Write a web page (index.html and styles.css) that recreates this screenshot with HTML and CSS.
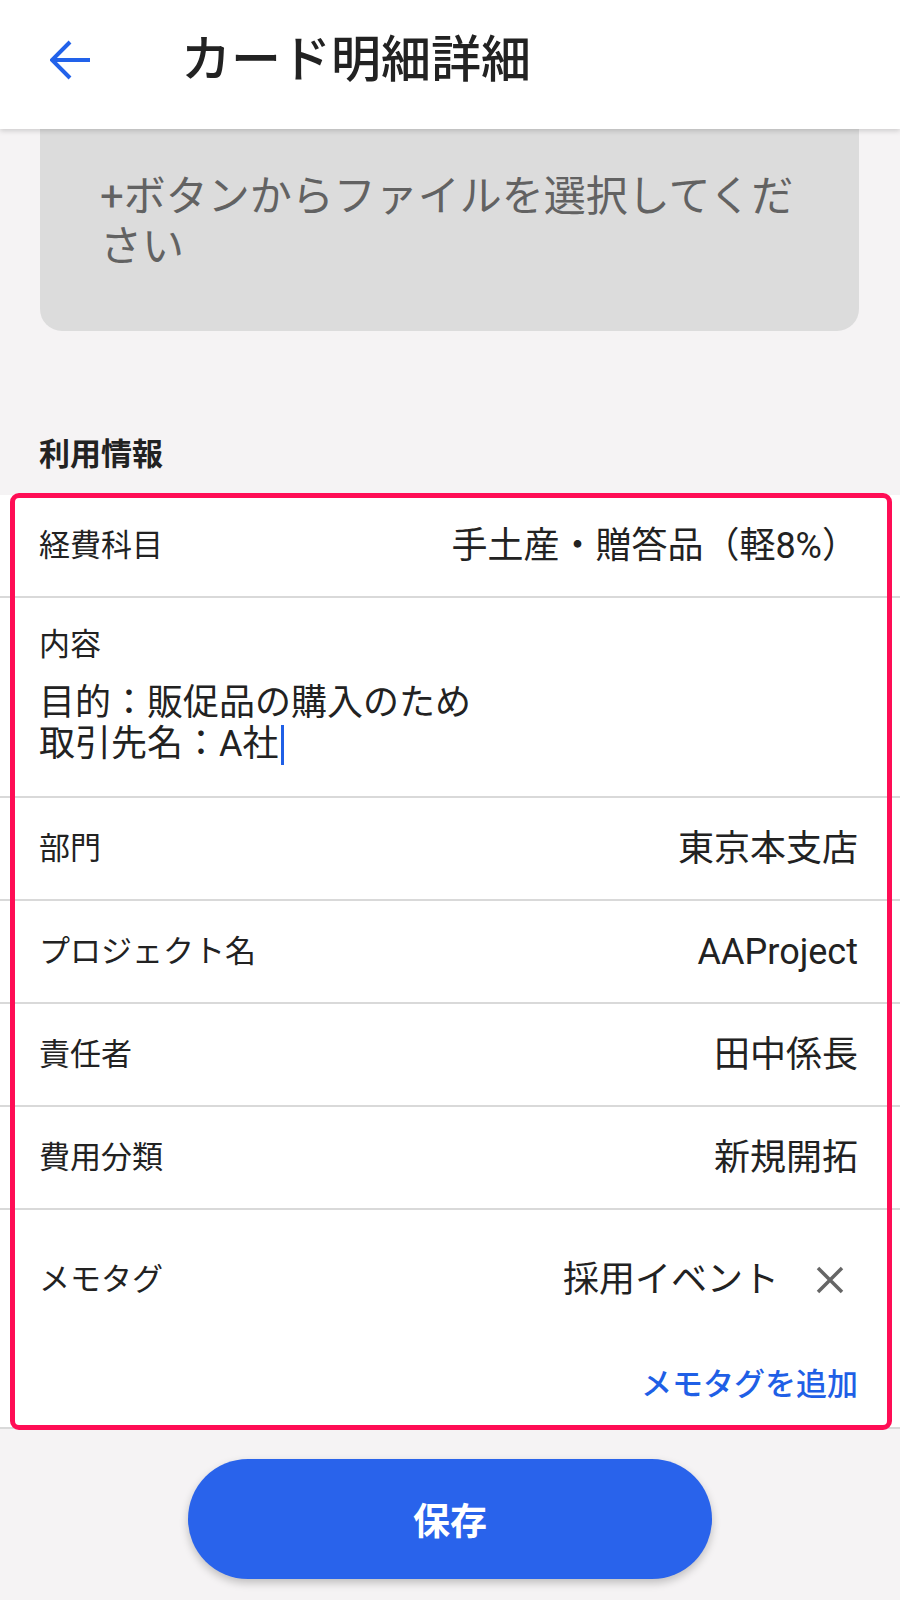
FILE: index.html
```html
<!DOCTYPE html>
<html lang="ja">
<head>
<meta charset="utf-8">
<title>カード明細詳細</title>
<link rel="stylesheet" href="styles.css">
</head>
<body>
<header class="appbar">
  <svg class="back" viewBox="0 0 40 40" width="40" height="40" aria-hidden="true">
    <path d="M2 20 H40" />
    <path d="M20 2 L2 20 L20 38" />
  </svg>
  <h1 class="title">カード明細詳細</h1>
</header>

<main class="content">
  <div class="dropzone">+ボタンからファイルを選択してください</div>

  <h2 class="section-label">利用情報</h2>

  <section class="card">
    <div class="row">
      <span class="label">経費科目</span>
      <span class="value">手土産・贈答品（軽8%）</span>
    </div>
    <div class="row row-multi">
      <span class="label">内容</span>
      <p class="memo-text">目的：販促品の購入のため<br>取引先名：A社<span class="caret"></span></p>
    </div>
    <div class="row">
      <span class="label">部門</span>
      <span class="value">東京本支店</span>
    </div>
    <div class="row">
      <span class="label">プロジェクト名</span>
      <span class="value">AAProject</span>
    </div>
    <div class="row">
      <span class="label">責任者</span>
      <span class="value">田中係長</span>
    </div>
    <div class="row">
      <span class="label">費用分類</span>
      <span class="value">新規開拓</span>
    </div>
    <div class="row row-tags">
      <div class="tag-line">
        <span class="label">メモタグ</span>
        <div class="tag">
          <span class="value">採用イベント</span>
          <svg class="remove" viewBox="0 0 28 28" width="28" height="28" aria-hidden="true">
            <path d="M2 2 L26 26 M26 2 L2 26" />
          </svg>
        </div>
      </div>
      <a class="add-tag">メモタグを追加</a>
    </div>
    <div class="highlight"></div>
  </section>

  <div class="actions">
    <button class="save">保存</button>
  </div>
</main>
</body>
</html>
```

FILE: styles.css
```css
* {
  box-sizing: border-box;
}

html, body {
  margin: 0;
  padding: 0;
}

body {
  width: 900px;
  min-height: 1600px;
  background: #f5f3f4;
  font-family: Roboto, "Noto Sans CJK JP", sans-serif;
  color: #222;
  overflow: hidden;
}

.appbar {
  position: relative;
  z-index: 2;
  height: 129px;
  background: #fff;
  display: flex;
  align-items: center;
  padding: 0 0 9px 50px;
  box-shadow: 0 2px 5px rgba(0, 0, 0, 0.16);
}

.back {
  flex: none;
  fill: none;
  stroke: #2262ea;
  stroke-width: 4;
}

.title {
  margin: 0 0 0 91px;
  font-size: 50px;
  font-weight: 500;
  line-height: 60px;
  color: #222;
}

.content {
  display: flex;
  flex-direction: column;
}

.dropzone {
  margin: 0 41px 0 40px;
  padding: 43px 55px 59px 60px;
  background: #dcdcdc;
  border-radius: 0 0 22px 22px;
  font-size: 42px;
  line-height: 50px;
  color: #626262;
}

.section-label {
  margin: 103px 0 20px 39px;
  font-size: 31px;
  line-height: 41px;
  font-weight: 700;
  color: #222;
}

.card {
  position: relative;
  background: #fff;
  display: flex;
  flex-direction: column;
}

.row {
  height: 103px;
  display: flex;
  align-items: center;
  justify-content: space-between;
  padding: 0 42px 0 39px;
  border-bottom: 2px solid #d9d9d9;
}

.label {
  font-size: 31px;
  line-height: 40px;
  color: #222;
}

.value {
  font-size: 36px;
  line-height: 42px;
  color: #222;
}

.row-multi {
  height: 200px;
  flex-direction: column;
  align-items: flex-start;
  justify-content: flex-start;
  padding-top: 27px;
}

.memo-text {
  margin: 18px 0 0;
  font-size: 36px;
  line-height: 41px;
  color: #222;
}

.caret {
  display: inline-block;
  width: 3px;
  height: 40px;
  margin-left: 2px;
  background: #1f5fe6;
  vertical-align: -9px;
}

.row-tags {
  height: 219px;
  flex-direction: column;
  align-items: stretch;
  justify-content: flex-start;
  padding-right: 42px;
}

.tag-line {
  height: 140px;
  display: flex;
  align-items: center;
  justify-content: space-between;
}

.tag {
  display: flex;
  align-items: center;
  gap: 37px;
  margin-right: 14px;
}

.remove {
  fill: none;
  stroke: #666;
  stroke-width: 3.5;
}

.add-tag {
  align-self: flex-end;
  margin-top: 15px;
  font-size: 31px;
  line-height: 40px;
  font-weight: 500;
  color: #1f5fe6;
}

.highlight {
  position: absolute;
  top: -2px;
  left: 10px;
  right: 8px;
  bottom: -1px;
  border: 5px solid #ff0d55;
  border-radius: 9px;
  pointer-events: none;
}

.actions {
  display: flex;
  justify-content: center;
  padding-top: 30px;
}

.save {
  width: 524px;
  height: 120px;
  border: none;
  border-radius: 60px;
  background: #2963eb;
  color: #fff;
  font-family: Roboto, "Noto Sans CJK JP", sans-serif;
  font-size: 37px;
  font-weight: 700;
  box-shadow: 0 4px 8px rgba(0, 0, 0, 0.22);
}
```
